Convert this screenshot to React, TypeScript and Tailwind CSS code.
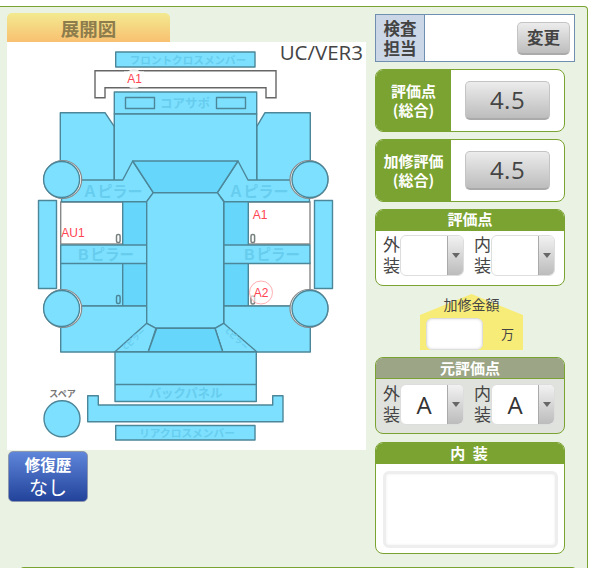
import React from "react";

const B = "#7ee0ff";
const D = "#66d6fa";
const S = "#4c8699";
const T = "#67cdee";
const JP = "font-['Noto_Sans_CJK_JP','Noto_Sans',sans-serif]";

function Diagram() {
  const p = { fill: B, stroke: S, strokeWidth: 1.4, strokeLinejoin: "round" as const };
  const d = { ...p, fill: D };
  const t = {
    fill: T,
    fontFamily: "'Noto Sans CJK JP',sans-serif",
    fontWeight: 700,
    textAnchor: "middle" as const,
  };
  const red = { fill: "#ff4452", fontFamily: "'Liberation Sans',sans-serif", fontSize: 12, textAnchor: "middle" as const };
  const wheel = (cx: number, cy: number, ring: number) => (
    <g key={`${cx}-${cy}`}>
      <circle cx={ring} cy={cy} r={19} fill="#fff" stroke="#8a8a8a" strokeWidth={1.2} />
      <circle cx={cx} cy={cy} r={18} {...p} />
    </g>
  );
  const zero = (x: number, y: number, c = "#77817f") => (
    <rect x={x} y={y} width={3.6} height={8} rx={1.5} fill="none" stroke={c} strokeWidth={1.5} />
  );
  return (
    <svg viewBox="7 42 359 408" className="block h-full w-full">
      <rect x={115.7} y={52} width={139.3} height={15} {...p} />
      <text x={188} y={64} fontSize={10.6} {...t}>フロントクロスメンバー</text>
      <path d="M95 70.7H276V97.7H266V87.7H105V97.7H95Z" fill="#fff" stroke="#666" strokeWidth={1.4} />

      <path d="M60.3 112.7H105L114.3 126.7V190H60.3Z" {...p} />
      <path d="M310.3 112.7H265L256.7 126.7V190H310.3Z" {...p} />
      <rect x={114.3} y={92} width={142.4} height={22} {...p} />
      <rect x={125.5} y={97.5} width={29} height={11} {...p} />
      <rect x={216.5} y={97.5} width={29} height={11} {...p} />
      <text x={185} y={107.5} fontSize={12.5} {...t}>コアサポ</text>
      <rect x={114.3} y={114} width={142.4} height={70} {...p} />

      <rect x={60.7} y={202} width={62} height={42} fill="#fff" stroke="#888" strokeWidth={1.4} />
      <rect x={248.3} y={202} width={61.7} height={42} fill="#fff" stroke="#888" strokeWidth={1.4} />
      <rect x={60.7} y={263} width={62} height={43} {...p} />
      <rect x={248.3} y={263} width={61.7} height={43} fill="#fff" stroke="#888" strokeWidth={1.4} />
      <rect x={122.7} y={200} width={24} height={106} {...d} />
      <rect x={223.7} y={200} width={24.6} height={106} {...d} />

      <rect x={60.7} y={245} width={86} height={18.5} {...p} />
      <rect x={223.7} y={245} width={86.3} height={18.5} {...p} />
      <text x={105} y={260} fontSize={14.5} {...t}>Ｂピラー</text>
      <text x={271} y={260} fontSize={14.5} {...t}>Ｂピラー</text>

      <path d="M60.7 306H146.7V352H60.7Z" {...p} />
      <path d="M310.3 306H223.7V352H310.3Z" {...p} />

      <path d="M61.5 201.7H146.7L153.3 192.7L132.7 161L122.7 180H62Z" {...p} />
      <path d="M309.5 201.7H224.3L217.3 192.7L238 161L248 180H309Z" {...p} />
      <text x={112.5} y={197} fontSize={15} {...t}>Ａピラー</text>
      <text x={258.5} y={197} fontSize={15} {...t}>Ａピラー</text>
      <path d="M132.7 161H238L217.3 192.7H153.3Z" {...d} />
      <path d="M153.3 192.7H217.3L223.7 201.7V323.3L215 328.3H156L146.7 323.3V201.7Z" {...p} />

      <path d="M146.7 323.3L156 328.3L148.3 351.7H115Z" {...p} />
      <path d="M223.7 323.3L215 328.3L222.7 351.7H256.7Z" {...p} />
      <text x={0} y={0} fontSize={7.5} {...t} transform="translate(136 341) rotate(-42)">Cピラー</text>
      <text x={0} y={0} fontSize={7.5} {...t} transform="translate(235 341) rotate(42)">Cピラー</text>
      <path d="M156.7 328.3H215L222.7 351.7H148.3Z" {...d} />
      <rect x={115} y={352} width={141.3} height={49.5} {...p} />
      <path d="M115 384.5H256.3" stroke={S} strokeWidth={1.4} />
      <text x={185.5} y={397.5} fontSize={12.4} {...t}>バックパネル</text>
      <path d="M87.7 395.7H98.3V405H272.7V395.7H283V421.7H87.7Z" {...p} />
      <rect x={115.7} y={425.5} width={139.3} height={14.5} {...p} />
      <text x={187} y={437} fontSize={10.7} {...t}>リアクロスメンバー</text>

      <rect x={38.5} y={200.5} width={18} height={88} {...p} />
      <rect x={314.5} y={200.5} width={18} height={88} {...p} />

      {wheel(61.6, 179.5, 62.7)}
      {wheel(310, 179.5, 309)}
      {wheel(61.6, 308.5, 62.7)}
      {wheel(310, 308.5, 309)}

      {zero(116.5, 234.5)}
      {zero(251, 234.5)}
      {zero(116.5, 295.5, "#4c8699")}
      {zero(251, 296)}

      <circle cx={62} cy={418.7} r={18} {...p} />
      <text x={62.5} y={397} fontSize={9} fontWeight={700} fill="#777" textAnchor="middle" fontFamily="'Noto Sans CJK JP',sans-serif">スペア</text>

      <circle cx={134} cy={79} r={9.7} fill="#e8e8e8" />
      <rect x={124} y={71.5} width={20} height={15.5} fill="#fff" />
      <text x={134.5} y={83} {...red}>A1</text>
      <text x={73} y={237} {...red}>AU1</text>
      <text x={260} y={219} {...red}>A1</text>
      <circle cx={261} cy={292.5} r={11.5} fill="#fff" fillOpacity={0.6} stroke="#ff9ca0" strokeWidth={0.8} />
      <text x={261} y={297} {...red}>A2</text>
      <text x={363} y={59.5} fontSize={20.5} fill="#444" textAnchor="end" fontFamily="'Open Sans',sans-serif">UC/VER3</text>
    </svg>
  );
}

function Gray({ className, children }: { className: string; children: React.ReactNode }) {
  return (
    <div className={`flex items-center justify-center rounded-[5px] border border-[#c4c4c4] border-b-2 border-b-[#aaa] bg-gradient-to-b from-[#ececec] to-[#bdbdbd] text-[#444] ${className}`}>
      {children}
    </div>
  );
}

function ScoreCard({ title, value }: { title: string; value: string }) {
  return (
    <div className="flex h-[63px] overflow-hidden rounded-[8px] border border-[#7ba331] bg-white">
      <div className={`flex w-[75px] flex-col items-center justify-center bg-[#7ba331] pb-[2px] text-[15px] font-bold leading-[19px] text-white ${JP}`}>
        <span>{title}</span>
        <span>(総合)</span>
      </div>
      <div className="flex flex-1 items-center pl-[14px]">
        <Gray className="h-[39px] w-[85px] font-['Open_Sans',sans-serif] text-[24px] tracking-[0.5px]">{value}</Gray>
      </div>
    </div>
  );
}

function Sel({ label, value }: { label: string; value?: string }) {
  return (
    <div className="flex items-start">
      <span className={`-mt-[2px] w-[17px] text-[17px] leading-[21px] text-[#444] ${JP}`}>{label}</span>
      <div className="flex h-[41px] w-[64px] overflow-hidden rounded-[6px] border border-[#ddd] bg-white">
        <div className="flex flex-1 items-center justify-center font-['Open_Sans',sans-serif] text-[24px] text-[#333]">{value}</div>
        <div className="flex w-[16px] items-center justify-center border-l border-[#aaa] bg-gradient-to-b from-[#f2f2f2] to-[#bcbcbc]">
          <span className="h-0 w-0 border-x-[4px] border-t-[5px] border-x-transparent border-t-[#666]" />
        </div>
      </div>
    </div>
  );
}

function SelRow({ a, b }: { a?: string; b?: string }) {
  return (
    <div className="flex gap-[10px] pl-[7px]">
      <Sel label="外装" value={a} />
      <Sel label="内装" value={b} />
    </div>
  );
}

export default function App() {
  return (
    <div className="h-[568px] w-[590px] overflow-hidden bg-white">
      <div className="ml-0 mt-[6px] h-[562px] w-[588px] rounded-tr-[4px] border-r border-t border-[#7ba331] bg-[#eaf2e3] pt-[6px]">
        <div className="flex items-start">
          <div className="ml-[7px] w-[359px]">
            <div className={`flex h-[29px] w-[163px] items-center justify-center rounded-t-[5px] bg-gradient-to-b from-[#f2ea90] to-[#f8c070] text-[18.5px] font-bold leading-[24px] text-[#8d7c4c] ${JP}`}>
              展開図
            </div>
            <div className="h-[408px] bg-white">
              <Diagram />
            </div>
            <div className={`ml-[1px] mt-[1px] flex h-[51px] w-[80px] flex-col items-center justify-center rounded-[5px] border border-[#8d97ad] bg-gradient-to-b from-[#5f86da] to-[#23439a] text-white ${JP}`}>
              <span className="text-[15.5px] font-bold leading-[21px]">修復歴</span>
              <span className="text-[19px] leading-[24px]">なし</span>
            </div>
          </div>
          <div className="ml-[9px] mt-[1px] w-[200px]">
            <div className="flex h-[48px] w-[200px] items-center border border-[#6f8fb0] bg-white">
              <div className={`flex h-full w-[49px] items-center justify-center border-r border-[#6f8fb0] bg-[#cbd7e7] text-center text-[16.5px] font-bold leading-[20px] text-[#444] ${JP}`}>
                検査<br />担当
              </div>
              <div className="flex flex-1 justify-end pr-[4px]">
                <Gray className={`h-[33px] w-[53px] text-[16.5px] font-bold ${JP}`}>変更</Gray>
              </div>
            </div>
            <div className="mt-[7px] flex w-[190px] flex-col gap-[7px]">
              <ScoreCard title="評価点" value="4.5" />
              <ScoreCard title="加修評価" value="4.5" />
              <div className="h-[77px] overflow-hidden rounded-[8px] border border-[#7ba331] bg-white">
                <div className={`flex h-[21px] items-center justify-center bg-[#7ba331] pb-[5px] text-[15px] font-bold leading-[15px] text-white ${JP}`}>評価点</div>
                <div className="pt-[4px]"><SelRow /></div>
              </div>
            </div>
            <div className="flex w-[190px] justify-center pt-[8px]">
              <div className={`relative ml-[3px] h-[56px] w-[103px] ${JP}`}>
                <div className="absolute inset-0 bg-[#f8ec78] [clip-path:polygon(50%_0,100%_21px,100%_100%,0_100%,0_21px)]" />
                <div className="relative">
                  <div className="pt-[1px] text-center text-[14px] leading-[18px] text-[#444]">加修金額</div>
                  <div className="mt-[5px] flex items-center pl-[6px]">
                    <div className="h-[32px] w-[57px] rounded-[6px] border border-[#ddd] bg-white shadow-[inset_0_0_3px_#ddd]" />
                    <span className="ml-[18px] text-[13px] text-[#444]">万</span>
                  </div>
                </div>
              </div>
            </div>
            <div className="mt-[7px] h-[77px] w-[190px] overflow-hidden rounded-[8px] border border-[#7ba331] bg-[#e0e2dd]">
              <div className={`flex h-[21px] items-center justify-center border-b border-[#7ba331] bg-[#9ca585] pb-[1px] text-[15px] font-bold leading-[15px] text-white ${JP}`}>元評価点</div>
              <div className="pt-[5px]"><SelRow a="A" b="A" /></div>
            </div>
            <div className="mt-[8px] h-[112px] w-[190px] overflow-hidden rounded-[8px] border border-[#7ba331] bg-white">
              <div className={`flex h-[21px] items-center justify-center bg-[#7ba331] pb-[3px] text-[15px] font-bold leading-[15px] tracking-[2px] text-white ${JP}`}>内 装</div>
              <div className="ml-[7px] mt-[7px] h-[77px] w-[175px] rounded-[6px] border-[3px] border-[#eeeeee] bg-white shadow-[inset_0_0_3px_#eee]" />
            </div>
          </div>
        </div>
        <div className="ml-[20px] mt-[13px] h-[10px] w-[556px] rounded-t-[4px] border-t border-[#7ba331]" />
      </div>
    </div>
  );
}
